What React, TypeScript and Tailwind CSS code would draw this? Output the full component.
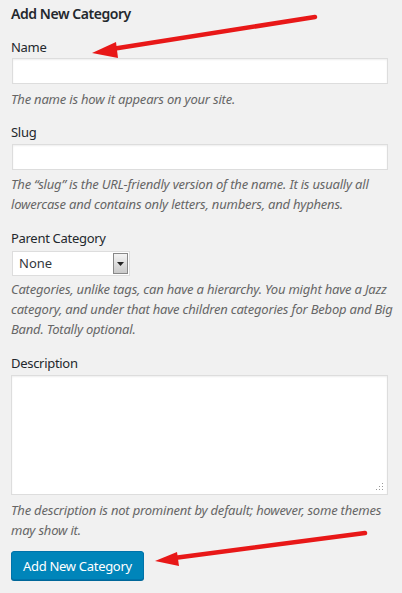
import React from "react"

const FONT = { fontFamily: '"Noto Sans", "Open Sans", sans-serif' }

function Help({ children, className = "" }: { children: React.ReactNode; className?: string }) {
  return (
    <p className={`text-[13px] leading-[20px] italic tracking-[-0.2px] text-[#666] ${className}`}>{children}</p>
  )
}

function Label({ children, className = "" }: { children: React.ReactNode; className?: string }) {
  return (
    <label className={`block text-[13px] leading-[20px] tracking-[-0.3px] text-[#23282d] ${className}`}>
      {children}
    </label>
  )
}

const inputCls =
  "ml-px w-[376px] bg-white border border-[#ddd] shadow-[inset_0_1px_2px_rgba(0,0,0,0.07)]"

export default function App() {
  return (
    <div className="relative w-[402px] h-[593px] bg-[#f1f1f1] overflow-hidden" style={FONT}>
      <div className="pl-[11px] pr-[8px] pt-[4px]">
        <h2 className="text-[14px] leading-[20px] font-semibold tracking-[-0.45px] text-[#23282d]">
          Add New Category
        </h2>

        {/* Name */}
        <Label className="mt-[13px]">Name</Label>
        <div className={`${inputCls} mt-px h-[26px]`} />
        <Help className="mt-[5px]">The name is how it appears on your site.</Help>

        {/* Slug */}
        <Label className="mt-[13px]">Slug</Label>
        <div className={`${inputCls} mt-[2px] h-[26px]`} />
        <Help className="mt-[4px] leading-[19px]">
          The “slug” is the URL-friendly version of the name. It is usually all lowercase and contains only letters,
          numbers, and hyphens.
        </Help>

        {/* Parent */}
        <Label className="mt-[14px]">Parent Category</Label>
        <div className="mt-[3px] ml-px flex h-[25px] w-[118px] bg-white border border-[#ddd]">
          <span className="flex-1 pl-[6px] text-[13px] leading-[23px] text-[#32373c]">None</span>
          <span className="m-px flex w-[15px] items-center justify-center border border-[#888] bg-gradient-to-b from-[#f4f4f4] to-[#c9c9c9]">
            <svg width="7" height="4" viewBox="0 0 7 4">
              <path d="M0 0h7L3.5 4z" fill="#222" />
            </svg>
          </span>
        </div>
        <Help className="mt-[3px] leading-[20.5px]">
          Categories, unlike tags, can have a hierarchy. You might have a Jazz category, and under that have children
          categories for Bebop and Big Band. Totally optional.
        </Help>

        {/* Description */}
        <Label className="mt-[14px]">Description</Label>
        <div className="relative mt-[2px] w-[377px] h-[120px] bg-white border border-[#ddd] shadow-[inset_0_1px_2px_rgba(0,0,0,0.07)]">
          <svg className="absolute right-[3px] bottom-[3px]" width="8" height="8" viewBox="0 0 8 8">
            <rect x="6" y="0" width="1" height="1" fill="#999" />
            <rect x="3" y="3" width="1" height="1" fill="#999" />
            <rect x="6" y="3" width="1" height="1" fill="#999" />
            <rect x="0" y="6" width="1" height="1" fill="#999" />
            <rect x="3" y="6" width="1" height="1" fill="#999" />
            <rect x="6" y="6" width="1" height="1" fill="#999" />
          </svg>
        </div>
        <Help className="mt-[5px] leading-[19px]">
          The description is not prominent by default; however, some themes may show it.
        </Help>

        <button className="mt-[11px] h-[29px] px-[11px] rounded-[3px] bg-[#0085ba] border border-[#0073aa] text-white text-[13px] leading-[26px] tracking-[-0.3px] shadow-[0_1px_0_#006799]">
          Add New Category
        </button>
      </div>

      {/* annotation arrows */}
      <svg className="absolute inset-0 pointer-events-none" width="402" height="593">
        <line x1="315" y1="17" x2="112" y2="49" stroke="#e81818" strokeWidth="4.5" strokeLinecap="round" />
        <polygon points="92,53 116,42 118,58" fill="#e81818" />
        <line x1="365" y1="533" x2="174" y2="558" stroke="#e81818" strokeWidth="4.5" strokeLinecap="round" />
        <polygon points="155,561 177,552 179,566" fill="#e81818" />
      </svg>
    </div>
  )
}
